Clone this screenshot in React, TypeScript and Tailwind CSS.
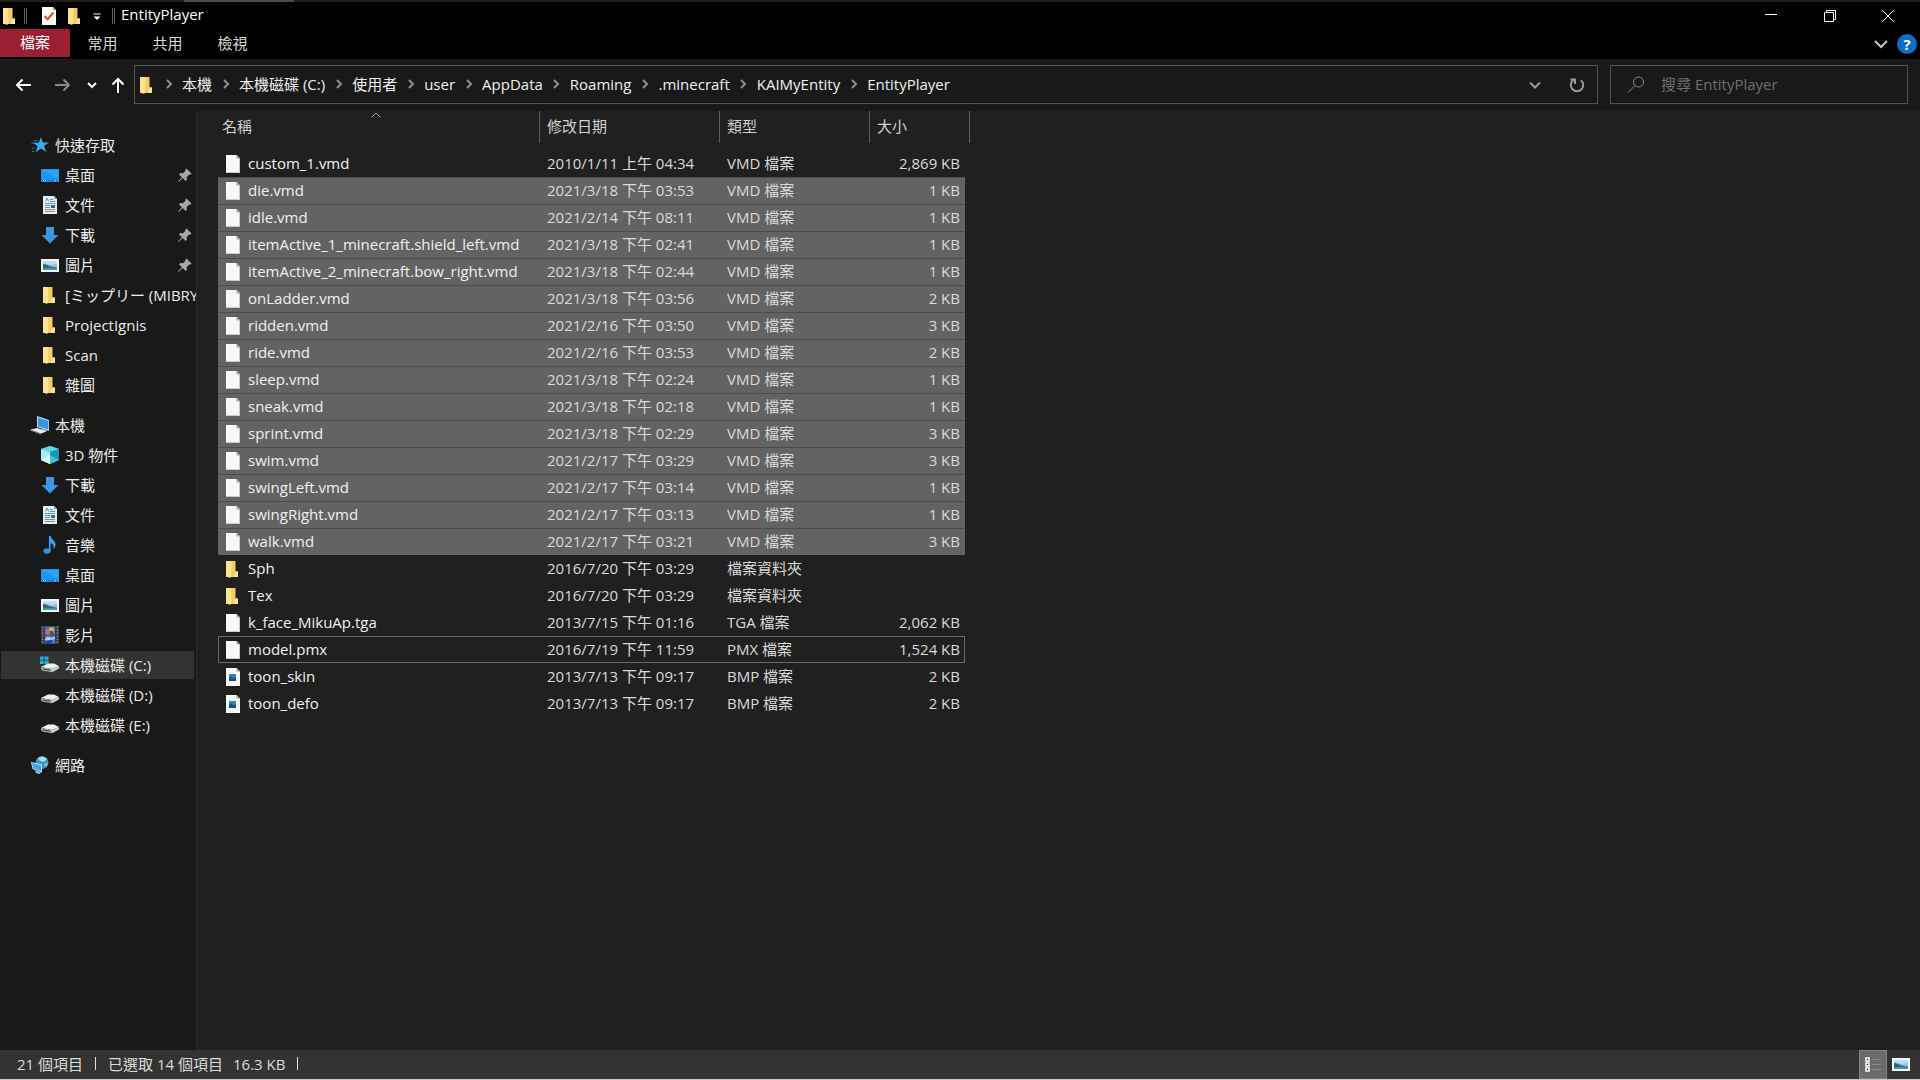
import type { ReactNode } from "react";

type IconKind =
  | "star"
  | "desktop"
  | "document"
  | "download"
  | "picture"
  | "folder"
  | "pc"
  | "cube"
  | "music"
  | "video"
  | "systemDrive"
  | "drive"
  | "network"
  | "file"
  | "bitmap";

interface NavItem {
  icon: IconKind;
  label: string;
  pinned?: boolean;
  active?: boolean;
}

interface NavGroup {
  icon: IconKind;
  label: string;
  items: NavItem[];
}

interface FileRow {
  icon: IconKind;
  name: string;
  date: string;
  type: string;
  size?: string;
  state?: "selected" | "focused";
}

const RIBBON_TABS = ["常用", "共用", "檢視"];

const CRUMBS = [
  "本機",
  "本機磁碟 (C:)",
  "使用者",
  "user",
  "AppData",
  "Roaming",
  ".minecraft",
  "KAIMyEntity",
  "EntityPlayer",
];

const NAV_GROUPS: NavGroup[] = [
  {
    icon: "star",
    label: "快速存取",
    items: [
      { icon: "desktop", label: "桌面", pinned: true },
      { icon: "document", label: "文件", pinned: true },
      { icon: "download", label: "下載", pinned: true },
      { icon: "picture", label: "圖片", pinned: true },
      { icon: "folder", label: "[ミップリー (MIBRY" },
      { icon: "folder", label: "ProjectIgnis" },
      { icon: "folder", label: "Scan" },
      { icon: "folder", label: "雜圖" },
    ],
  },
  {
    icon: "pc",
    label: "本機",
    items: [
      { icon: "cube", label: "3D 物件" },
      { icon: "download", label: "下載" },
      { icon: "document", label: "文件" },
      { icon: "music", label: "音樂" },
      { icon: "desktop", label: "桌面" },
      { icon: "picture", label: "圖片" },
      { icon: "video", label: "影片" },
      { icon: "systemDrive", label: "本機磁碟 (C:)", active: true },
      { icon: "drive", label: "本機磁碟 (D:)" },
      { icon: "drive", label: "本機磁碟 (E:)" },
    ],
  },
  { icon: "network", label: "網路", items: [] },
];

const FILES: FileRow[] = [
  { icon: "file", name: "custom_1.vmd", date: "2010/1/11 上午 04:34", type: "VMD 檔案", size: "2,869 KB" },
  { icon: "file", name: "die.vmd", date: "2021/3/18 下午 03:53", type: "VMD 檔案", size: "1 KB", state: "selected" },
  { icon: "file", name: "idle.vmd", date: "2021/2/14 下午 08:11", type: "VMD 檔案", size: "1 KB", state: "selected" },
  { icon: "file", name: "itemActive_1_minecraft.shield_left.vmd", date: "2021/3/18 下午 02:41", type: "VMD 檔案", size: "1 KB", state: "selected" },
  { icon: "file", name: "itemActive_2_minecraft.bow_right.vmd", date: "2021/3/18 下午 02:44", type: "VMD 檔案", size: "1 KB", state: "selected" },
  { icon: "file", name: "onLadder.vmd", date: "2021/3/18 下午 03:56", type: "VMD 檔案", size: "2 KB", state: "selected" },
  { icon: "file", name: "ridden.vmd", date: "2021/2/16 下午 03:50", type: "VMD 檔案", size: "3 KB", state: "selected" },
  { icon: "file", name: "ride.vmd", date: "2021/2/16 下午 03:53", type: "VMD 檔案", size: "2 KB", state: "selected" },
  { icon: "file", name: "sleep.vmd", date: "2021/3/18 下午 02:24", type: "VMD 檔案", size: "1 KB", state: "selected" },
  { icon: "file", name: "sneak.vmd", date: "2021/3/18 下午 02:18", type: "VMD 檔案", size: "1 KB", state: "selected" },
  { icon: "file", name: "sprint.vmd", date: "2021/3/18 下午 02:29", type: "VMD 檔案", size: "3 KB", state: "selected" },
  { icon: "file", name: "swim.vmd", date: "2021/2/17 下午 03:29", type: "VMD 檔案", size: "3 KB", state: "selected" },
  { icon: "file", name: "swingLeft.vmd", date: "2021/2/17 下午 03:14", type: "VMD 檔案", size: "1 KB", state: "selected" },
  { icon: "file", name: "swingRight.vmd", date: "2021/2/17 下午 03:13", type: "VMD 檔案", size: "1 KB", state: "selected" },
  { icon: "file", name: "walk.vmd", date: "2021/2/17 下午 03:21", type: "VMD 檔案", size: "3 KB", state: "selected" },
  { icon: "folder", name: "Sph", date: "2016/7/20 下午 03:29", type: "檔案資料夾" },
  { icon: "folder", name: "Tex", date: "2016/7/20 下午 03:29", type: "檔案資料夾" },
  { icon: "file", name: "k_face_MikuAp.tga", date: "2013/7/15 下午 01:16", type: "TGA 檔案", size: "2,062 KB" },
  { icon: "file", name: "model.pmx", date: "2016/7/19 下午 11:59", type: "PMX 檔案", size: "1,524 KB", state: "focused" },
  { icon: "bitmap", name: "toon_skin", date: "2013/7/13 下午 09:17", type: "BMP 檔案", size: "2 KB" },
  { icon: "bitmap", name: "toon_defo", date: "2013/7/13 下午 09:17", type: "BMP 檔案", size: "2 KB" },
];

// All item icons are drawn on a 20x20 grid
const ICONS: Record<IconKind, ReactNode> = {
  star: (
    <>
      <path d="M11 2l1.8 5.6 6.2-.2-5 3.6 2.2 6L11 13.6 5.6 17.2l2-6L3 7.6l5.8.1z" fill="#3fa9ec" />
      <path d="M3.6 5.6h4M1.4 8.2h3.4M2 13.2h3M1.6 16.4h2.6" stroke="#2077b0" strokeWidth="1" />
    </>
  ),
  desktop: (
    <>
      <rect x="1" y="4" width="18" height="13" fill="#1e96f2" />
      <path d="M2 5h16v9L2 5z" fill="#2ea4fb" />
      <path d="M2 15.5h16" stroke="#0a5ca6" strokeDasharray="1 1" />
      <path d="M3 15.5h3M15 15.5h2" stroke="#d3ecff" strokeDasharray="1 1" />
    </>
  ),
  document: (
    <>
      <path d="M3 1h11l3 3v15H3z" fill="#e9edef" />
      <path d="M14 1v3h3z" fill="#9aa5ab" />
      <path d="M5.5 6.5L7.2 3l1.400 3.500M10 4.500h3M10 6.500h5M5 8.500h10M5 10.500h5" stroke="#4a9cc9" fill="none" strokeWidth="1" />
      <path d="M5 12.500h5M5 14.500h10M5 16.500h10" stroke="#7f8f98" />
      <rect x="11" y="10" width="4" height="3" fill="#2a6d9c" />
    </>
  ),
  download: <path d="M6 2h8v8h4.500L10 18.500 1.500 10H6z" fill="#3d95e3" />,
  picture: (
    <>
      <rect x="1" y="4" width="18" height="13" fill="#f2f5f6" />
      <rect x="3" y="6" width="14" height="9" fill="#8fc1e4" />
      <path d="M3 6h14v3l-6 1-8-2z" fill="#bfdcf0" />
      <path d="M3 9c3 0 5 1.500 8 2.500s5 .8 6 1V15H3z" fill="#2f6b74" />
      <path d="M3 13.500c4-1 9-.8 14 0V15H3z" fill="#4f93a8" />
    </>
  ),
  folder: (
    <>
      <path d="M3 2h9.500v10.500H15V18H3z" fill="#f2cd63" />
      <path d="M3 2h4.500l.8 1v15L6 19l-.500-1H3z" fill="#ffe28f" />
      <path d="M12.500 12.500H15V18h-4v-2.500z" fill="#fbe09a" />
    </>
  ),
  pc: (
    <>
      <path d="M7 1l12 4v11L7 12z" fill="#bfe1f5" />
      <path d="M8 2.400l10.300 3.400v8.800L8 11.200z" fill="#3597e0" />
      <path d="M12 13.500l5 1.700-2 2-4-2z" fill="#9fb0ba" />
      <path d="M.5 14.500l7-1.500 9 3.500-5.500 2z" fill="#e7ebed" />
      <path d="M.5 14.500l10.500 4v1L.5 15.500z" fill="#9ba4a9" />
    </>
  ),
  cube: (
    <>
      <path d="M10 1l9 3v11l-9 4-9-4V4z" fill="#2ab8cf" />
      <path d="M1 4l9-3 9 3-9 3z" fill="#5fd6e4" />
      <path d="M1 4l9 3v12l-9-4z" fill="#a8f0ee" />
      <path d="M1 15l9-5v9z" fill="#d6fbf7" />
      <path d="M10 7l9-3v11l-9 4z" fill="#1b93b3" />
      <path d="M10 10l9 5-9 4z" fill="#3cc3d2" />
    </>
  ),
  music: (
    <>
      <ellipse cx="7" cy="16" rx="3.600" ry="2.800" fill="#2b93e6" />
      <path d="M9 1h1.800c.3 3.500 4.700 4.500 4.700 8.500 0 2-.8 3.500-2 5 .5-3.500-.3-5.500-2.900-6.500V16H9z" fill="#3aa0f0" />
    </>
  ),
  video: (
    <>
      <rect x="1" y="1" width="18" height="18" fill="#3a3d44" />
      <path d="M2.500 1.500v18M17.500 1.500v18" stroke="#7d818a" strokeWidth="1.500" strokeDasharray="1.500 1.500" />
      <rect x="5" y="1.500" width="10" height="8" fill="#4d67b8" />
      <path d="M9 2.500h5v5l-5 1z" fill="#c9b944" />
      <path d="M5.500 5.500l3-2 1.500 2v4H5.500z" fill="#d8618c" />
      <path d="M10 6h3v3.500h-3z" fill="#3a5b2c" />
      <rect x="5" y="10.500" width="10" height="8" fill="#4b7ae0" />
      <path d="M5 14l3-2.500 3 1.500 4-1v2l-4 1H5z" fill="#b8ccf6" />
      <path d="M5 17l4-1.500 2-1 2 2-2 2H5z" fill="#23418f" />
    </>
  ),
  systemDrive: (
    <>
      <path d="M0 1.500h3.700v3.300H0zM4.500 1.500h4v3.300h-4zM0 5.500h3.700V9H0zM4.500 5.500h4V9h-4z" fill="#22b2dc" />
      <path d="M1 12l7-3.500h6l5 2.500-7 3z" fill="#eceeef" />
      <path d="M1 12l11 2v3.200L3 15.800 1 14.500z" fill="#a4a8ab" />
      <path d="M12 14l7-3v2.500l-7 3.700z" fill="#cfd2d4" />
      <path d="M3 13.500l7 1.300v1l-7-1.200z" fill="#3b3e40" />
    </>
  ),
  drive: (
    <>
      <path d="M1 13l7-3.500h6l5 2.500-7 3z" fill="#eceeef" />
      <path d="M1 13l11 2v3.200L3 16.800 1 15.500z" fill="#a4a8ab" />
      <path d="M12 15l7-3v2.500l-7 3.700z" fill="#cfd2d4" />
      <path d="M3 14.500l7 1.300v1l-7-1.200z" fill="#3b3e40" />
    </>
  ),
  network: (
    <>
      <circle cx="12" cy="7.500" r="6.500" fill="#3b93c4" />
      <path d="M8 3.500c3-3 7-2 9 .5l-3 3-4-1z" fill="#a9dcec" />
      <path d="M14 9l4-1-2 4z" fill="#8dd0df" />
      <path d="M1 7l11 2.500v8L2.500 14z" fill="#cdeaf8" />
      <path d="M1.800 8.100l9.400 2.200v5.900l-8-2.800z" fill="#43a4ea" />
      <path d="M5 15.500l6 2-1.500 1.500L6 18z" fill="#bcc8cf" />
    </>
  ),
  file: (
    <>
      <path d="M3 1h10.500L17 4.500V19H3z" fill="#f7f8f8" />
      <path d="M13.500 1v3.500H17z" fill="#a5a5a5" />
      <path d="M16.500 5v13.500H3" stroke="#c9cccd" fill="none" />
    </>
  ),
  bitmap: (
    <>
      <path d="M3 1h10.500L17 4.500V19H3z" fill="#f7f8f8" />
      <path d="M13.500 1v3.500H17z" fill="#a5a5a5" />
      <rect x="6" y="7" width="7" height="7" fill="#2f86c6" />
      <path d="M6 11l2.500-1.500 2.500 2 2-1V14H6z" fill="#174f85" />
    </>
  ),
};

function Icon({ kind }: { kind: IconKind }) {
  return (
    <svg viewBox="0 0 20 20" className="h-5 w-5 shrink-0" aria-hidden="true">
      {ICONS[kind]}
    </svg>
  );
}

function Glyph({ d, className = "", strokeWidth = 2 }: { d: string; className?: string; strokeWidth?: number }) {
  return (
    <svg viewBox="0 0 20 20" fill="none" stroke="currentColor" strokeWidth={strokeWidth} className={`h-5 w-5 shrink-0 ${className}`} aria-hidden="true">
      <path d={d} />
    </svg>
  );
}

function Pin() {
  return (
    <svg viewBox="-1 0 20 20" className="h-5 w-5 shrink-0" aria-hidden="true">
      <path d="M11.500 3.500l5 5-1.200 1.200-1-.2-2.600 2.600.2 2.700-1.300 1.200-2.900-2.900L3.500 17l-.500-.500 3.900-4.200L4 9.400l1.200-1.300 2.700.2 2.600-2.600-.2-1z" fill="#a3a8ab" />
    </svg>
  );
}

function TitleBar() {
  return (
    <header className="bg-black text-white">
      <div className="flex h-[2px] bg-[#1f1f1f]">
        <div className="ml-[184px] w-[110px] bg-[#4b4b4b]" />
      </div>
      <div className="flex h-[27px] items-center">
        <Icon kind="folder" />
        <div className="ml-1 h-4 w-[3px] border-x border-[#5a5a5a]" />
        <button aria-label="內容" className="ml-3">
          <svg viewBox="0 0 20 20" className="h-5 w-5" aria-hidden="true">
            <path d="M3 1h11l3 3v15H3z" fill="#f8f8f8" />
            <path d="M14 1v3h3z" fill="#9a9a9a" />
            <path d="M5.500 10l3 3.200L14.500 6.500" stroke="#d0582b" strokeWidth="2" fill="none" />
          </svg>
        </button>
        <button aria-label="新增資料夾" className="ml-[6px]">
          <Icon kind="folder" />
        </button>
        <button aria-label="自訂快速存取工具列" className="ml-[2px]">
          <svg viewBox="0 0 20 20" className="h-5 w-5" aria-hidden="true">
            <path d="M6.500 8h7" stroke="#fff" />
            <path d="M6.500 10.500h7L10 14z" fill="#fff" />
          </svg>
        </button>
        <div className="ml-[5px] h-4 w-[3px] border-x border-[#5a5a5a]" />
        <h1 className="ml-[6px] pb-[3px]">EntityPlayer</h1>
        <div className="ml-auto flex pr-[3px]">
          <button aria-label="最小化" className="flex w-[58px] justify-center">
            <Glyph d="M3 8.500h12" strokeWidth={1} />
          </button>
          <button aria-label="往下還原" className="flex w-[58px] justify-center">
            <Glyph d="M4.500 6.500h9v9h-9zM6.500 6.500v-2h9v9h-2" strokeWidth={1} />
          </button>
          <button aria-label="關閉" className="flex w-[58px] justify-center">
            <Glyph d="M4 4l12 12M16 4L4 16" strokeWidth={1} />
          </button>
        </div>
      </div>
      <nav className="flex h-[30px] items-start text-[#d8d8d8]">
        <button className="h-7 w-[70px] bg-[#9b1f33] pb-[2px] text-white">檔案</button>
        {RIBBON_TABS.map((tab) => (
          <button key={tab} className="h-7 w-[65px]">
            {tab}
          </button>
        ))}
        <div className="ml-auto flex h-[30px] items-center gap-[6px] pr-[3px]">
          <button aria-label="展開功能區">
            <Glyph d="M4 7l6 6 6-6" className="text-[#c8c8c8]" />
          </button>
          <button aria-label="說明" className="flex h-5 w-5 items-center justify-center rounded-full bg-[#0f6cc9] font-bold text-white">
            ?
          </button>
        </div>
      </nav>
    </header>
  );
}

function AddressBar() {
  return (
    <div className="flex h-[52px] items-start bg-[#191919] pt-[6px] pr-3 text-[#f0f0f0]">
      <div className="flex h-10 w-[134px] shrink-0 items-center pl-[14px]">
        <button aria-label="上一頁">
          <Glyph d="M17 10H3M8.500 4.500L3 10l5.500 5.500" className="text-white" />
        </button>
        <button aria-label="下一頁" className="ml-[18px]">
          <Glyph d="M3 10h14M11.500 4.500L17 10l-5.500 5.500" className="text-[#8a8a8a]" />
        </button>
        <button aria-label="最近的位置" className="ml-[10px]">
          <Glyph d="M6 8l4 4 4-4" className="text-white" />
        </button>
        <button aria-label="上一層" className="ml-[6px]">
          <Glyph d="M10 18V4M4.500 9.500L10 4l5.500 5.500" className="text-white" />
        </button>
      </div>
      <div className="flex h-[39px] min-w-0 flex-1 items-center border border-[#535353] pl-[2px]">
        <Icon kind="folder" />
        <ol className="-ml-[2px] flex items-center pb-[2px]">
          {CRUMBS.map((crumb) => (
            <li key={crumb} className="flex items-center whitespace-nowrap">
              <span className="flex w-[27px] justify-center">
                <Glyph d="M8 6l4 4-4 4" className="text-[#8f8f8f]" />
              </span>
              <a href="#" className="text-[#f0f0f0]">
                {crumb}
              </a>
            </li>
          ))}
        </ol>
        <button aria-label="先前的位置" className="ml-auto">
          <Glyph d="M5 7.500l5 5 5-5" className="text-[#9a9a9a]" />
        </button>
        <button aria-label="重新整理" className="mr-[10px] ml-[22px]">
          <Glyph d="M13.800 5.200a6.200 6.200 0 1 1-7.600 0M3.500 4.500h4.500V9" className="text-[#9a9a9a]" />
        </button>
      </div>
      <label className="ml-3 flex h-[39px] w-[298px] shrink-0 items-center border border-[#535353] pl-[15px]">
        <svg viewBox="0 0 20 20" fill="none" stroke="#8a8a8a" className="h-5 w-5 shrink-0" aria-hidden="true">
          <circle cx="12.500" cy="7" r="5" />
          <path d="M9 10.500L2 17.500" />
        </svg>
        <input
          type="search"
          aria-label="搜尋"
          placeholder="搜尋 EntityPlayer"
          className="ml-[15px] w-full bg-transparent pb-[2px] outline-none placeholder:text-[#6e6e6e]"
        />
      </label>
    </div>
  );
}

function Sidebar() {
  return (
    <nav className="flex w-[197px] shrink-0 flex-col gap-[10px] overflow-hidden border-r border-[#2d2d2d] bg-[#191919] pt-[19px] pr-[2px] text-[#ececec]">
      {NAV_GROUPS.map((group) => (
        <div key={group.label}>
          <a href="#" className="flex h-[30px] items-center gap-[5px] pl-[30px]">
            <Icon kind={group.icon} />
            {group.label}
          </a>
          <ul>
            {group.items.map((item) => (
              <li key={item.label} className="py-px pl-px">
                <a href="#" className={`flex h-7 items-center gap-[5px] pl-[39px] whitespace-nowrap ${item.active ? "bg-[#333333]" : ""}`}>
                  <Icon kind={item.icon} />
                  <span className="flex-1">{item.label}</span>
                  {item.pinned && <Pin />}
                </a>
              </li>
            ))}
          </ul>
        </div>
      ))}
    </nav>
  );
}

function rowClass(state: FileRow["state"]) {
  if (state === "selected") return "border-[#636363] border-t-[#4c4c4c] bg-[#636363]";
  if (state === "focused") return "border-[#6a6a6a]";
  return "border-transparent";
}

function FileTable() {
  return (
    <main className="min-w-0 flex-1 bg-[#202020] pl-[21px]">
      <table className="block w-[752px] text-left">
        <thead className="block">
          <tr className="flex h-[39px] items-start text-[#d0d0d0]">
            <th className="relative h-8 w-[322px] border-r border-[#5e5e5e] pl-1 leading-[30px] font-normal">
              名稱
              <svg viewBox="0 0 12 6" fill="none" stroke="#a0a0a0" className="absolute top-px left-[152px] h-[6px] w-3" aria-hidden="true">
                <path d="M1.500 5.500L6 1l4.500 4.500" />
              </svg>
            </th>
            <th className="h-8 w-[180px] border-r border-[#5e5e5e] pl-[7px] leading-[30px] font-normal">修改日期</th>
            <th className="h-8 w-[150px] border-r border-[#5e5e5e] pl-[7px] leading-[30px] font-normal">類型</th>
            <th className="h-8 w-[100px] border-r border-[#5e5e5e] pl-[7px] leading-[30px] font-normal">大小</th>
          </tr>
        </thead>
        <tbody className="block pr-[5px]">
          {FILES.map((file) => (
            <tr key={file.name} className={`flex h-[27px] items-center border ${rowClass(file.state)}`}>
              <td className="flex w-[321px] items-center gap-[5px] pl-1 text-[#f0f0f0]">
                <Icon kind={file.icon} />
                <span className="pb-[2px]">{file.name}</span>
              </td>
              <td className="w-[180px] pb-[2px] pl-[7px] text-[#dadada]">{file.date}</td>
              <td className="w-[150px] pb-[2px] pl-[7px] text-[#dadada]">{file.type}</td>
              <td className="flex-1 pr-1 pb-[2px] text-right text-[#dadada]">{file.size}</td>
            </tr>
          ))}
        </tbody>
      </table>
    </main>
  );
}

function StatusBar() {
  return (
    <footer className="flex h-[30px] items-center border-b border-[#c8c8c8] bg-[#333333] pl-[17px] text-[#dcdcdc]">
      <div className="flex items-center pb-[2px]">
        <span>21 個項目</span>
        <span className="mx-3 h-[13px] w-px bg-[#e0e0e0]" />
        <span>已選取 14 個項目</span>
        <span className="ml-[10px]">16.3 KB</span>
        <span className="mx-3 h-[13px] w-px bg-[#e0e0e0]" />
      </div>
      <div className="ml-auto flex h-full items-center pr-[9px]">
        <button aria-label="詳細資料" className="flex h-full w-7 items-center justify-center border border-[#838383] bg-[#6b6b6b]">
          <svg viewBox="0 0 20 20" className="h-5 w-5" aria-hidden="true">
            <path d="M3 3h3v3H3zM3 8h3v3H3zM3 13h3v3H3z" fill="#333" stroke="#fff" strokeWidth="1.500" />
            <path d="M9 4.500h9M9 9.500h9M9 14.500h9" stroke="#8c8c8c" />
          </svg>
        </button>
        <button aria-label="大圖示" className="ml-1 pb-[2px]">
          <Icon kind="picture" />
        </button>
      </div>
    </footer>
  );
}

export default function App() {
  return (
    <div className="flex min-h-screen flex-col bg-[#191919] font-['Open_Sans','Noto_Sans_CJK_TC',sans-serif] text-[15px] leading-5">
      <TitleBar />
      <AddressBar />
      <div className="flex flex-1">
        <Sidebar />
        <FileTable />
      </div>
      <StatusBar />
    </div>
  );
}
